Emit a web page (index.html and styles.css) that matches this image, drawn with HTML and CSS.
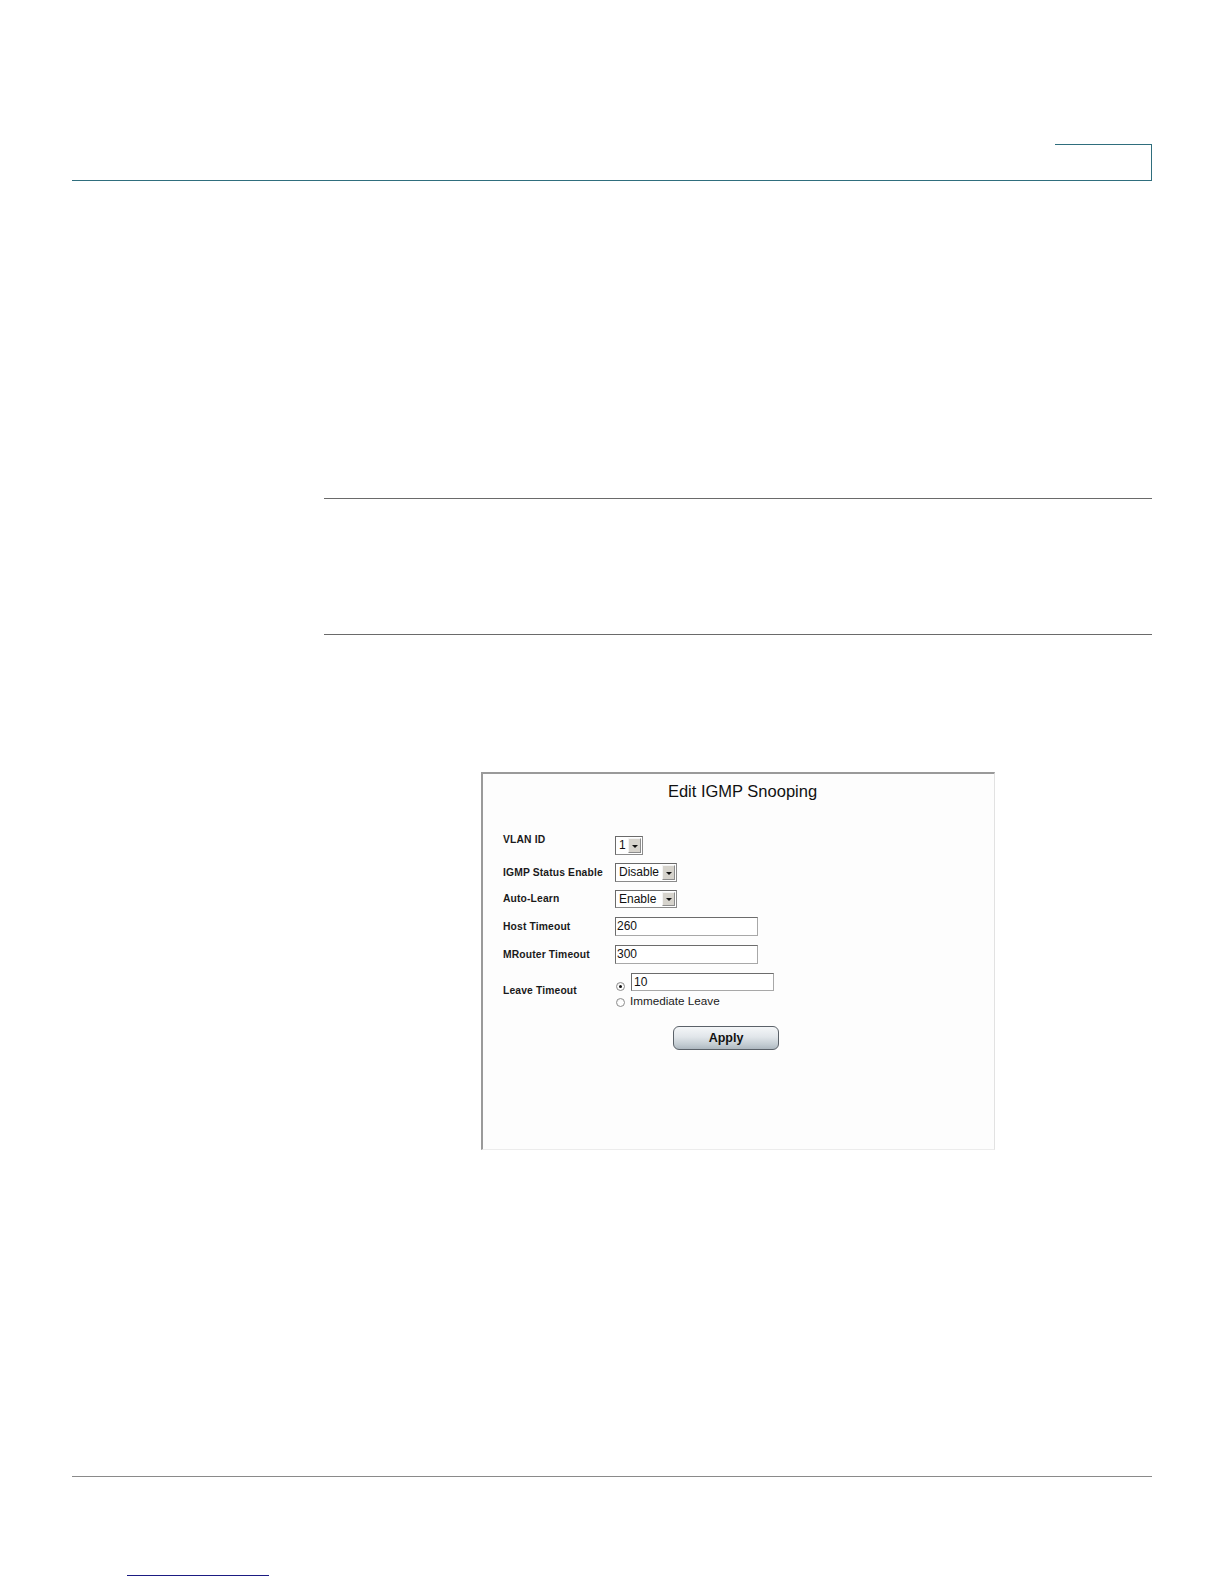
FILE: index.html
```html
<!DOCTYPE html>
<html>
<head>
<meta charset="utf-8">
<link rel="stylesheet" href="styles.css">
</head>
<body>
<div class="page">
  <div class="header">
    <div class="tabrow"><div class="tab"></div></div>
  </div>

  <div class="note-block"></div>

  <div class="figure">
    <div class="title">Edit IGMP Snooping</div>

    <div class="row row-vlan">
      <div class="label label-top">VLAN ID</div>
      <div class="select sel-small"><span class="sel-val">1</span><span class="sel-btn"><span class="arrow"></span></span></div>
    </div>

    <div class="row row-2">
      <div class="label">IGMP Status Enable</div>
      <div class="select sel-wide"><span class="sel-val">Disable</span><span class="sel-btn"><span class="arrow"></span></span></div>
    </div>

    <div class="row row-3">
      <div class="label">Auto-Learn</div>
      <div class="select sel-wide sel-short"><span class="sel-val">Enable</span><span class="sel-btn"><span class="arrow"></span></span></div>
    </div>

    <div class="row row-4">
      <div class="label">Host Timeout</div>
      <div class="text-input">260</div>
    </div>

    <div class="row row-5">
      <div class="label">MRouter Timeout</div>
      <div class="text-input">300</div>
    </div>

    <div class="row row-6">
      <div class="label">Leave Timeout</div>
      <div class="leave-controls">
        <div class="leave-line">
          <span class="radio radio-on"></span>
          <div class="text-input input-leave">10</div>
        </div>
        <div class="leave-line leave-line-2">
          <span class="radio"></span>
          <span class="radio-text">Immediate Leave</span>
        </div>
      </div>
    </div>

    <div class="apply-row">
      <div class="apply-btn">Apply</div>
    </div>
  </div>

  <div class="footer-line"></div>
  <div class="footer-link"></div>
</div>
</body>
</html>
```

FILE: styles.css
```css
html, body {
  margin: 0;
  padding: 0;
  background: #ffffff;
}

.page {
  padding: 0 72px;
  font-family: "Liberation Sans", Arial, sans-serif;
  color: #111;
}

.header {
  padding-top: 144px;
}

.tabrow {
  display: flex;
  justify-content: flex-end;
  border-bottom: 1px solid #2f6e7d;
  height: 36px;
}

.tab {
  width: 96px;
  height: 35px;
  border-top: 1px solid #2f6e7d;
  border-right: 1px solid #2f6e7d;
}

.note-block {
  margin-top: 317px;
  margin-left: 252px;
  height: 135px;
  border-top: 1px solid #6a6a6a;
  border-bottom: 1px solid #6a6a6a;
}

.figure {
  margin-top: 137px;
  margin-left: 409px;
  width: 511px;
  height: 367px;
  border-top: 2px solid #9a9a9a;
  border-left: 2px solid #9a9a9a;
  border-right: 1px solid #e2e2e2;
  border-bottom: 1px solid #ececec;
  background: #fdfdfd;
  padding-top: 8px;
  box-sizing: content-box;
}

.title {
  font-size: 16.5px;
  line-height: 19px;
  text-align: center;
  padding-left: 8px;
  color: #111;
}

.row {
  display: flex;
  align-items: center;
  padding-left: 20px;
}

.label {
  width: 112px;
  flex: none;
  font-size: 10.3px;
  font-weight: bold;
  line-height: 12px;
  letter-spacing: 0.15px;
  color: #1a1a1a;
}

.label-top {
  align-self: flex-start;
  margin-top: -2px;
}

.row-vlan { margin-top: 35px; height: 19px; }
.row-2 { margin-top: 8px; height: 19px; }
.row-3 { margin-top: 8px; height: 18px; }
.row-4 { margin-top: 9px; height: 19px; }
.row-5 { margin-top: 9px; height: 19px; }
.row-6 { margin-top: 9px; }

.select {
  display: flex;
  align-items: stretch;
  box-sizing: border-box;
  height: 19px;
  border: 1px solid #8a8a8a;
  border-top-color: #6a6a6a;
  border-left-color: #6a6a6a;
  background: #fff;
  padding: 1px;
}

.sel-small { width: 28px; }
.sel-wide { width: 62px; }
.sel-short { height: 18px; }

.sel-val {
  flex: 1;
  font-size: 12px;
  line-height: 15px;
  padding-left: 2px;
  color: #111;
}

.sel-btn {
  width: 13px;
  flex: none;
  box-sizing: border-box;
  background: #d6d3cc;
  border: 1px solid;
  border-color: #f4f4f4 #8c8c8c #8c8c8c #f4f4f4;
  display: flex;
  align-items: center;
  justify-content: center;
}

.arrow {
  width: 0;
  height: 0;
  border-left: 3px solid transparent;
  border-right: 3px solid transparent;
  border-top: 3px solid #111;
  margin-top: 1px;
}

.text-input {
  box-sizing: border-box;
  width: 143px;
  height: 19px;
  border: 1px solid #a8a8a8;
  border-top-color: #6c6c6c;
  border-left-color: #6c6c6c;
  background: #fff;
  font-size: 12px;
  line-height: 17px;
  padding-left: 1px;
  color: #111;
}

.leave-controls {
  display: flex;
  flex-direction: column;
  margin-left: -1px;
}

.leave-line {
  display: flex;
  align-items: center;
}

.input-leave {
  height: 18px;
  line-height: 16px;
  padding-left: 2px;
  margin-left: 6px;
}

.radio {
  width: 9px;
  height: 9px;
  box-sizing: border-box;
  border-radius: 50%;
  border: 1px solid #8e8e8e;
  background: radial-gradient(circle at 60% 60%, #ffffff 40%, #e4e4e4 100%);
  flex: none;
  position: relative;
  margin-left: 2px;
}

.leave-line .radio-on {
  margin-top: 8px;
}

.radio-on::after {
  content: "";
  position: absolute;
  left: 2px;
  top: 2px;
  width: 3px;
  height: 3px;
  border-radius: 50%;
  background: #111;
}

.leave-line-2 {
  margin-top: 3px;
}

.leave-line-2 .radio {
  margin-top: 2px;
}

.radio-text {
  margin-left: 5px;
  font-size: 11.7px;
  line-height: 14px;
  color: #222;
}

.apply-row {
  margin-top: 18px;
  padding-left: 190px;
}

.apply-btn {
  box-sizing: border-box;
  width: 106px;
  height: 24px;
  border: 1px solid #5b6269;
  border-radius: 6px;
  background: linear-gradient(#f4f6f8 0%, #e1e6ea 45%, #c3ccd2 80%, #aeb8c0 100%);
  font-size: 12.5px;
  font-weight: bold;
  line-height: 22px;
  text-align: center;
  color: #111;
}

.footer-line {
  margin-top: 326px;
  border-top: 1px solid #8a8a8a;
}

.footer-link {
  margin-top: 98px;
  margin-left: 55px;
  width: 142px;
  border-top: 1px solid #1b1b82;
}
```
